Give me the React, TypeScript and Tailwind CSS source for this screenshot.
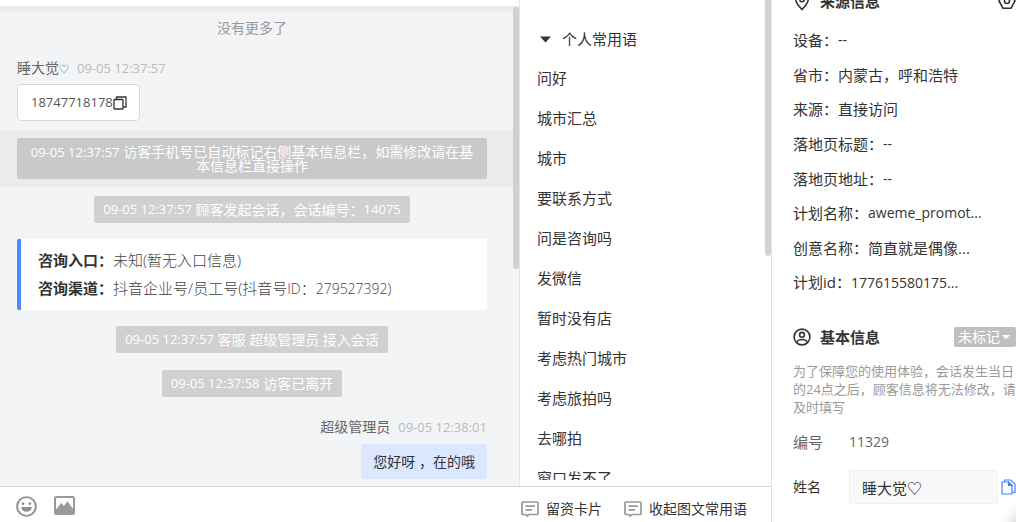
import React, { useState } from 'react';

const SOURCE_INFO: { label: string; value: string }[] = [
    { label: '设备', value: '--' },
    { label: '省市', value: '内蒙古，呼和浩特' },
    { label: '来源', value: '直接访问' },
    { label: '落地页标题', value: '--' },
    { label: '落地页地址', value: '--' },
    { label: '计划名称', value: 'aweme_promot...' },
    { label: '创意名称', value: '简直就是偶像...' },
    { label: '计划id', value: '177615580175...' },
];

const PHRASES = ['问好', '城市汇总', '城市', '要联系方式', '问是咨询吗', '发微信', '暂时没有店', '考虑热门城市', '考虑旅拍吗', '去哪拍', '窗口发不了'];

// --- Icons ---

const CopySquares = () => (
    <svg className="w-[14px] h-[14px]" viewBox="0 0 14 14" fill="none" stroke="#333" strokeWidth="1.3">
        <rect x="1" y="3.5" width="9" height="9.5" rx="0.5" />
        <path d="M3.5 3.5V1h9.5v10h-3" />
    </svg>
);

const SmileIcon = () => (
    <svg className="w-[21px] h-[21px]" viewBox="0 0 22 22" fill="none">
        <circle cx="11" cy="11" r="9.8" stroke="#8f8f8f" strokeWidth="2" />
        <circle cx="7.4" cy="8" r="1.4" fill="#8f8f8f" />
        <circle cx="14.6" cy="8" r="1.4" fill="#8f8f8f" />
        <path d="M5.5 11.5h11c0 3.200-2.400 5-5.500 5s-5.500-1.800-5.500-5z" fill="#8f8f8f" />
    </svg>
);

const PictureIcon = () => (
    <svg className="w-[21px] h-[19px]" viewBox="0 0 21 19" fill="none">
        <rect x="1" y="1" width="19" height="17" rx="1.500" stroke="#999" strokeWidth="2" />
        <path d="M2 13.500L7.200 7l2.800 3L13.500 5.200 19 13v5H2z" fill="#999" />
    </svg>
);

const NoteIcon = () => (
    <svg className="w-[18px] h-[16px]" viewBox="0 0 18 16" fill="none" stroke="#999" strokeWidth="1.700">
        <path d="M2 1h14q1 0 1 1v10.500q0 1-1 1H8L6.300 15l-1.700-1.500H2q-1 0-1-1V2q0-1 1-1z" />
        <path d="M4.500 5.200h9.500M4.500 8.800h6.500" />
    </svg>
);

const PinIcon = () => (
    <svg className="w-[18px] h-[20px]" viewBox="0 0 18 20" fill="none" stroke="#333" strokeWidth="1.600">
        <path d="M9 18.500C5 14.500 2.700 11.500 2.700 8a6.300 6.300 0 0 1 12.600 0c0 3.500-2.300 6.500-6.300 10.500z" />
        <circle cx="9" cy="8.500" r="2.200" />
    </svg>
);

const HexIcon = () => (
    <svg className="w-[18px] h-[18px]" viewBox="0 0 18 18" fill="none" stroke="#333" strokeWidth="1.600">
        <path d="M5 1.800h8L17 9l-4 7.200H5L1 9z" />
        <circle cx="9" cy="9" r="2.500" />
    </svg>
);

const UserIcon = () => (
    <svg className="w-[18px] h-[18px]" viewBox="0 0 18 18" fill="none" stroke="#333" strokeWidth="1.600">
        <circle cx="9" cy="9" r="7.900" />
        <circle cx="9" cy="6.800" r="2.400" />
        <path d="M3.800 14.500c.6-2.300 2.400-3 5.200-3s4.600.7 5.200 3" />
    </svg>
);

const CopyPage = () => (
    <svg className="w-[15px] h-[16px]" viewBox="0 0 15 16" fill="none" stroke="#4285f4" strokeWidth="1.200">
        <path d="M1 3h6.500L11 6.500V15H1z" />
        <path d="M7.500 3v3.500H11z" fill="#4285f4" />
        <path d="M3.500 3V1h6.300L14 5v8.500h-3" />
    </svg>
);

// --- Small pieces ---

const Stamp: React.FC<{ children: React.ReactNode }> = ({ children }) => <span className="text-[13px]">{children}</span>;

const Notice: React.FC<{ children: React.ReactNode }> = ({ children }) => (
    <p className="self-center h-[27px] flex items-center whitespace-pre rounded-xs bg-[#d0d0d0] px-[9px] text-sm text-white">{children}</p>
);

const VisitorName = () => (
    <>
        睡大觉<span className="text-[10px]">♡</span>
    </>
);

const ChatPanel = () => (
    <section className="relative flex-1 min-w-0 flex flex-col border-r border-[#e2e4e6] bg-[#f3f4f6] overflow-hidden">
        <div className="h-[6px] shrink-0 bg-white" />
        <div className="h-2 shrink-0 bg-linear-to-b from-[#e6e8ea] to-[#f3f4f6]" />
        <div className="flex flex-col pl-[17px] pr-8">
            <p className="self-center h-7 leading-7 text-sm text-[#999]">没有更多了</p>
            <div className="mt-4 h-5 flex items-center gap-2 text-sm text-[#666]">
                <span><VisitorName /></span>
                <time className="text-[13px] text-[#bbb]">09-05 12:37:57</time>
            </div>
            <div className="mt-[6px] self-start h-[37px] pl-[13px] pr-3 flex items-center rounded border border-[#d9d9d9] bg-white text-[13px] text-[#555]">
                18747718178
                <button type="button" aria-label="复制"><CopySquares /></button>
            </div>
        </div>
        <div className="mt-[9px] h-[57px] shrink-0 bg-[#ebebeb] pl-[17px] pr-8 py-2">
            <p className="h-full flex items-center justify-center rounded-xs bg-[#c9c9c9] px-3 text-sm leading-[13px] text-center text-white">
                <span><Stamp>09-05 12:37:57</Stamp> 访客手机号已自动标记右侧基本信息栏，如需修改请在基本信息栏直接操作</span>
            </p>
        </div>
        <div className="mt-[9px] flex flex-col pl-[17px] pr-8">
            <Notice><Stamp>09-05 12:37:57</Stamp> 顾客发起会话，会话编号：<Stamp>14075</Stamp></Notice>
            <dl className="my-4 pt-[7px] pb-2 pl-[17px] border-l-4 border-[#4c8bfd] rounded-xs bg-white text-[15px] leading-7 text-[#444]">
                <div className="flex">
                    <dt className="font-bold text-[#333]">咨询入口：</dt>
                    <dd className="font-light">未知(暂无入口信息)</dd>
                </div>
                <div className="flex">
                    <dt className="font-bold text-[#333]">咨询渠道：</dt>
                    <dd className="font-light">抖音企业号/员工号(抖音号<span className="text-sm">ID</span>：<span className="text-sm">279527392)</span></dd>
                </div>
            </dl>
            <Notice><Stamp>09-05 12:37:57</Stamp> 客服 超级管理员 接入会话</Notice>
            <div className="h-[17px]" />
            <Notice><Stamp>09-05 12:37:58</Stamp> 访客已离开</Notice>
            <div className="mt-5 h-5 flex items-center justify-end gap-2 text-sm text-[#666]">
                超级管理员
                <time className="text-[13px] text-[#bbb]">09-05 12:38:01</time>
            </div>
            <p className="mt-[7px] self-end h-[35px] flex items-center rounded px-3 bg-[#dbe7ff] text-sm text-[#333]">您好呀 ，在的哦</p>
        </div>
        <div className="absolute right-0 top-[7px] h-[262px] w-[6px] rounded-full bg-[#d0d0d0]" />
    </section>
);

const PhrasePanel = () => {
    const [open, setOpen] = useState(true);

    return (
        <section className="relative w-[251px] shrink-0 bg-white pb-[6px]">
            <div className="h-full overflow-hidden pl-[17px] pt-[21px] text-[15px] text-[#333]">
                <button type="button" className="h-[37px] flex items-center gap-[11px] pl-[3px]" onClick={() => setOpen(!open)}>
                    <svg className="w-[11px] h-[7px]" viewBox="0 0 11 7"><path d="M0 .5h11L5.500 6.500z" fill="#333" /></svg>
                    个人常用语
                </button>
                {open && (
                    <ul>
                        {PHRASES.map(p => <li key={p} className="h-10 flex items-center">{p}</li>)}
                    </ul>
                )}
            </div>
            <div className="absolute right-0 top-0 h-64 w-[6px] rounded-b-full bg-[#d3d3d3]" />
        </section>
    );
};

const Toolbar = () => (
    <footer className="h-9 shrink-0 flex border-t border-[#d9d9d9] bg-white text-sm text-[#333]">
        <div className="flex-1 flex items-start gap-[17px] pl-4 pt-[9px]">
            <button type="button" aria-label="表情"><SmileIcon /></button>
            <button type="button" aria-label="图片"><PictureIcon /></button>
        </div>
        <div className="w-[250px] shrink-0 flex items-center gap-[22px] pt-[9px]">
            <button type="button" className="flex items-center gap-[7px] whitespace-nowrap"><NoteIcon />留资卡片</button>
            <button type="button" className="flex items-center gap-[7px] whitespace-nowrap"><NoteIcon />收起图文常用语</button>
        </div>
    </footer>
);

const VisitorPanel = () => {
    const [name, setName] = useState('睡大觉♡');

    return (
        <aside className="relative w-[245px] shrink-0 border-l border-[#e2e2e2] bg-white overflow-hidden pl-[21px] text-[15px] text-[#333]">
            <div className="-mt-[13px] h-7 flex items-center">
                <PinIcon />
                <h2 className="ml-[9px] flex-1 font-bold">来源信息</h2>
                <button type="button" aria-label="设置"><HexIcon /></button>
            </div>
            <dl className="mt-2 h-[277px] grid grid-rows-8">
                {SOURCE_INFO.map(({ label, value }) => (
                    <div key={label} className="flex items-center">
                        <dt>{label}：</dt>
                        <dd className={/^[\x00-\x7f]+$/.test(value) ? 'text-sm' : ''}>{value}</dd>
                    </div>
                ))}
            </dl>
            <div className="mt-[23px] h-7 flex items-center">
                <UserIcon />
                <h2 className="ml-[9px] flex-1 font-bold">基本信息</h2>
                <label className="relative flex h-5 w-[62px] items-center rounded-xs bg-[#bfbfbf] text-sm text-white">
                    <select aria-label="标记" className="w-full appearance-none pl-1 outline-none">
                        <option>未标记</option>
                    </select>
                    <svg className="absolute right-[6px] w-2 h-[5px] pointer-events-none" viewBox="0 0 8 5"><path d="M0 0h8L4 4.500z" fill="#fff" /></svg>
                </label>
            </div>
            <p className="mt-[11px] text-[13px] leading-[18px] text-[#999]">为了保障您的使用体验，会话发生当日的24点之后，顾客信息将无法修改，请及时填写</p>
            <div className="mt-[10px] h-8 flex items-center text-[#666]">
                <span className="w-14">编号</span>
                <span className="text-sm">11329</span>
            </div>
            <div className="mt-3 h-[34px] flex items-center">
                <label htmlFor="visitor-name" className="w-14 shrink-0 text-sm">姓名</label>
                <input
                    id="visitor-name"
                    className="h-full flex-1 min-w-0 rounded-xs border border-[#f0f0f0] bg-[#f9f9f9] px-3 outline-none"
                    value={name}
                    onChange={e => setName(e.target.value)}
                />
                <button type="button" aria-label="复制姓名" className="ml-[3px] shrink-0"><CopyPage /></button>
            </div>
            <div className="absolute -right-7 -bottom-6 size-7 rounded-full shadow-[0_0_16px_6px_rgba(0,0,0,0.2)]" />
        </aside>
    );
};

const App: React.FC = () => (
    <div className="h-screen flex overflow-hidden bg-white font-['Open_Sans','Noto_Sans_CJK_SC',sans-serif]">
        <main className="flex-1 min-w-0 flex flex-col">
            <div className="flex-1 min-h-0 flex">
                <ChatPanel />
                <PhrasePanel />
            </div>
            <Toolbar />
        </main>
        <VisitorPanel />
    </div>
);

export default App;
